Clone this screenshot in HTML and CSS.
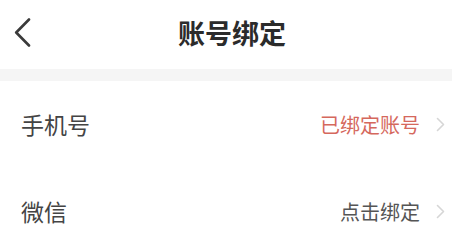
FILE: index.html
```html
<!DOCTYPE html>
<html lang="zh-CN">
<head>
<meta charset="utf-8">
<title>账号绑定</title>
<link rel="stylesheet" href="styles.css">
</head>
<body>
<div class="page">
  <header class="navbar">
    <div class="back">
      <svg class="back-icon" viewBox="0 0 17 29" width="17" height="29">
        <polyline points="15,1.5 2.2,14.5 15,27.5" fill="none" stroke="#3a3a3a" stroke-width="2.6" stroke-linecap="round" stroke-linejoin="round"/>
      </svg>
    </div>
    <h1 class="title">账号绑定</h1>
    <div class="spacer"></div>
  </header>
  <div class="band"></div>
  <ul class="list">
    <li class="row">
      <span class="label">手机号</span>
      <span class="value value-bound">已绑定账号</span>
      <svg class="arrow" viewBox="0 0 9 15" width="9" height="15">
        <polyline points="1.5,1.5 7.5,7.5 1.5,13.5" fill="none" stroke="#d6d6d6" stroke-width="1.6" stroke-linecap="round" stroke-linejoin="round"/>
      </svg>
    </li>
    <li class="row">
      <span class="label">微信</span>
      <span class="value">点击绑定</span>
      <svg class="arrow" viewBox="0 0 9 15" width="9" height="15">
        <polyline points="1.5,1.5 7.5,7.5 1.5,13.5" fill="none" stroke="#d6d6d6" stroke-width="1.6" stroke-linecap="round" stroke-linejoin="round"/>
      </svg>
    </li>
  </ul>
</div>
</body>
</html>
```
FILE: styles.css
```css
html, body {
  margin: 0;
  padding: 0;
  background: #ffffff;
}
body {
  font-family: "Noto Sans CJK SC", "Noto Sans", sans-serif;
  color: #333333;
}
.page {
  width: 452px;
}
.navbar {
  height: 69px;
  display: flex;
  align-items: center;
  background: #ffffff;
}
.back {
  width: 44px;
  padding-left: 14px;
  box-sizing: border-box;
  display: flex;
  align-items: center;
  margin-bottom: 5px;
}
.back-icon {
  display: block;
}
.title {
  flex: 1;
  margin: 0 0 4px 0;
  text-align: center;
  font-size: 27px;
  font-weight: 700;
  color: #2b2b2b;
  line-height: 1;
  letter-spacing: 0;
}
.spacer {
  width: 32px;
}
.band {
  height: 12px;
  background: #f5f5f5;
}
.list {
  list-style: none;
  margin: 0;
  padding: 0;
}
.row {
  height: 87px;
  display: flex;
  align-items: center;
  padding: 0 7px 0 21px;
}
.label {
  flex: 1;
  font-size: 23px;
  color: #444444;
  line-height: 1;
}
.value {
  font-size: 20px;
  color: #555555;
  line-height: 1;
  margin-right: 16px;
}
.value-bound {
  color: #d5685d;
}
.arrow {
  display: block;
}
```
